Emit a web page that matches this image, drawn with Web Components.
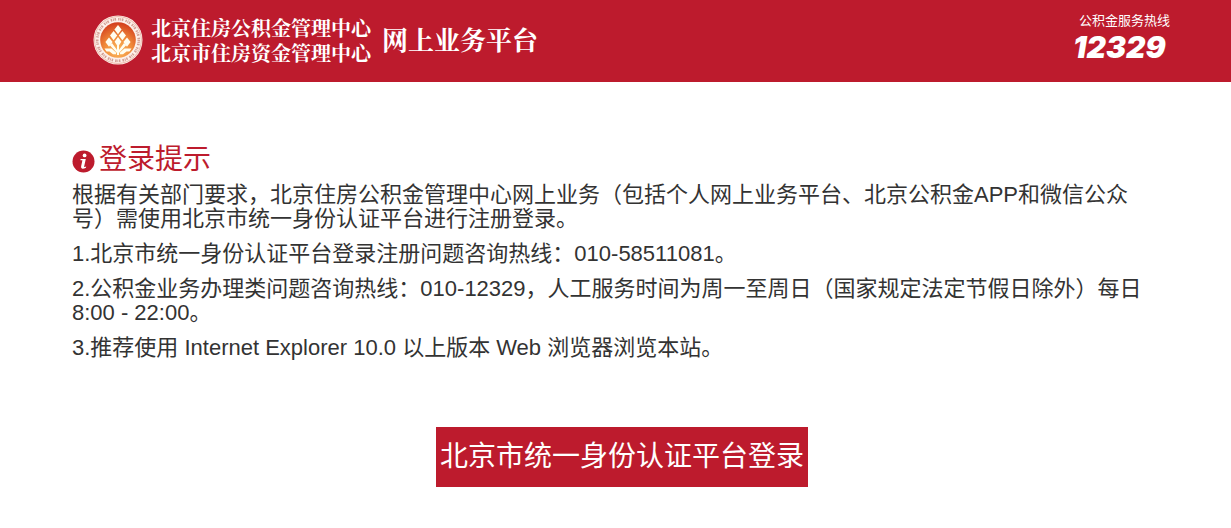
<!DOCTYPE html>
<html lang="zh-CN">
<head>
<meta charset="utf-8">
<title>北京住房公积金网上业务平台</title>
<style>
  body { margin: 0; background: #fff; color: #333; font-family: "Liberation Sans", "Noto Sans CJK SC", sans-serif; }
</style>
</head>
<body>
<site-header></site-header>
<login-notice>
  <span slot="title">登录提示</span>
  <notice-line>根据有关部门要求，北京住房公积金管理中心网上业务（包括个人网上业务平台、北京公积金APP和微信公众号）需使用北京市统一身份认证平台进行注册登录。</notice-line>
  <notice-line>1.北京市统一身份认证平台登录注册问题咨询热线：010-58511081。</notice-line>
  <notice-line>2.公积金业务办理类问题咨询热线：010-12329，人工服务时间为周一至周日（国家规定法定节假日除外）每日8:00 - 22:00。</notice-line>
  <notice-line>3.推荐使用 Internet Explorer 10.0 以上版本 Web 浏览器浏览本站。</notice-line>
  <login-button slot="action">北京市统一身份认证平台登录</login-button>
</login-notice>
<script>
const define = (name, html) => {
  const template = document.createElement('template');
  template.innerHTML = html;
  customElements.define(name, class extends HTMLElement {
    constructor() {
      super();
      this.attachShadow({ mode: 'open' }).append(template.content.cloneNode(true));
    }
  });
};

define('site-emblem', `
  <style>
    :host { display: block; width: 50px; height: 50px; }
    svg { display: block; width: 100%; height: 100%; }
  </style>
  <svg viewBox="0 0 50 50" aria-hidden="true">
    <defs>
      <radialGradient id="sun" cx=".5" cy=".8" r=".8">
        <stop offset="0" stop-color="#fbb95c"/>
        <stop offset=".5" stop-color="#f08a3a"/>
        <stop offset="1" stop-color="#d23c1c"/>
      </radialGradient>
    </defs>
    <circle cx="25" cy="25" r="24.5" fill="#fdf0ea"/>
    <circle cx="25" cy="25" r="23.4" fill="none" stroke="#e0957f" stroke-width=".6"/>
    <circle cx="25" cy="25" r="20.8" fill="none" stroke="#b86a5c" stroke-width="2.6" stroke-dasharray="1.4 .8 .9 .7 1.6 2.1" opacity=".6"/>
    <circle cx="25" cy="25" r="17.8" fill="url(#sun)"/>
    <g fill="#fffdf0">
      <path d="M25 10l3.6 4.6-3.6 4.6-3.6-4.6z"/>
      <path d="M20.600 16l3.6 4.600-3.600 4.600-3.600-4.600zM29.400 16l3.600 4.600-3.600 4.600-3.600-4.600z"/>
      <path d="M16 22.500l3.600 4.600-3.600 4.600-3.600-4.600zM34 22.500l3.600 4.600-3.600 4.600-3.600-4.600z"/>
      <path d="M25 22l3.400 4.800-2.400 3.400v4.800l5-7 2.400 2-7.400 8v2h-2v-2l-7.400-8 2.400-2 5 7v-4.800l-2.400-3.400z"/>
      <path d="M11.500 33.500h7l4.500 4v1.800h-3l-3.500-2.900h-3zM38.500 33.500h-7l-4.500 4v1.800h3l3.500-2.900h3z"/>
    </g>
  </svg>
`);

define('site-header', `
  <style>
    :host { display: block; background: #bd1b2d; color: #fff; }
    header { display: flex; align-items: center; height: 82px; box-sizing: border-box; padding: 0 61px 2px 93px; }
    .names, .platform { padding-top: 4px; font-family: "Liberation Serif", "Noto Serif CJK SC", "Noto Sans CJK SC", serif; font-weight: 700; white-space: nowrap; }
    .names { display: grid; margin-left: 8px; font-size: 20px; line-height: 25px; }
    .platform { margin: 0 auto 0 11px; font-size: 26px; line-height: 38px; }
    .hotline { display: grid; white-space: nowrap; padding-bottom: 2px; }
    .label { font: 13px/16px "Liberation Sans", "Noto Sans CJK SC", sans-serif; padding-left: 6px; }
    .number { font: italic 900 30px/36px Inter, Lato, "Liberation Sans", sans-serif; }
  </style>
  <header>
    <site-emblem></site-emblem>
    <div class="names"><span>北京住房公积金管理中心</span><span>北京市住房资金管理中心</span></div>
    <div class="platform">网上业务平台</div>
    <div class="hotline"><span class="label">公积金服务热线</span><span class="number">12329</span></div>
  </header>
`);

define('login-notice', `
  <style>
    :host { display: block; padding: 62px 59px 41px 72px; }
    h1 { display: flex; align-items: center; gap: 4px; margin: 0 0 8px; color: #bd1b2d; font-size: 28px; font-weight: 400; line-height: 31px; }
    svg { width: 23px; height: 23px; margin-top: 4px; }
    .lines { display: grid; gap: 11px; padding-right: 13px; }
    .action { display: flex; justify-content: center; margin-top: 67px; }
  </style>
  <main>
    <h1>
      <svg viewBox="0 0 23 23" aria-hidden="true">
        <circle cx="11.5" cy="11.5" r="11" fill="#bd1b2d"/>
        <circle cx="12.6" cy="5.4" r="1.9" fill="#fff"/>
        <path d="M8.600 9h5.200l-1.600 7.200q-.2 1 .5.900l1.500-.5-.3 1.200q-1.900 1.100-3.400 1-1.800-.2-1.400-2.200l1.300-6.300H8.400z" fill="#fff"/>
      </svg>
      <slot name="title"></slot>
    </h1>
    <div class="lines"><slot></slot></div>
    <div class="action"><slot name="action"></slot></div>
  </main>
`);

define('notice-line', `
  <style>
    :host { display: block; }
    p { margin: 0; font-size: 22px; line-height: 24px; }
  </style>
  <p><slot></slot></p>
`);

define('login-button', `
  <style>
    :host { display: block; }
    button { height: 60px; padding: 0 4px; border: 0; background: #bd1b2d; color: #fff; font-family: inherit; font-size: 28px; line-height: 32px; cursor: pointer; }
  </style>
  <button type="button"><slot></slot></button>
`);
</script>
</body>
</html>
